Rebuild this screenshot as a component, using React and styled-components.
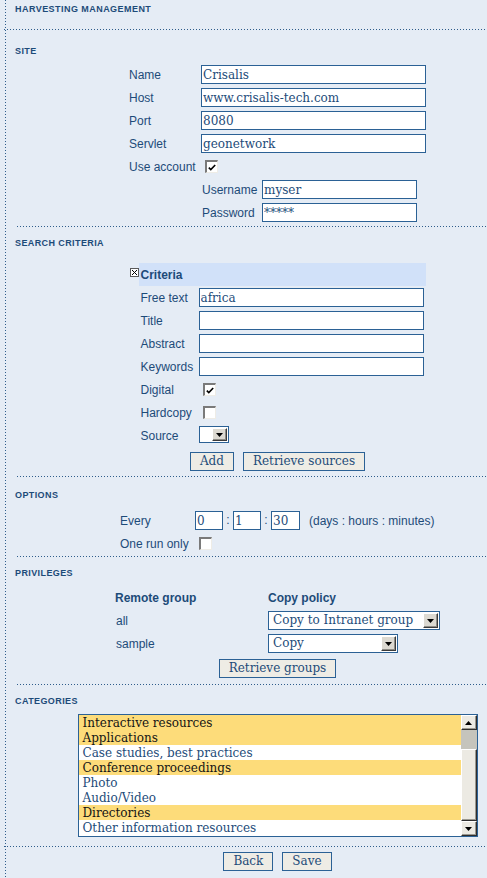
import React from 'react';
import styled, { createGlobalStyle } from 'styled-components';

const C = {
  bg: '#e5ecf5',
  ink: '#1d4b79',
  border: '#2b6195',
  dot: '#2f5d8b',
  header: '#d1e1f9',
  hl: '#fddc7a',
  btn: '#eeece5',
};

const SANS = '"Liberation Sans", Arial, sans-serif';
const SERIF = '"DejaVu Serif", serif';

const Global = createGlobalStyle`
  html, body { margin: 0; padding: 0; background: ${C.bg}; overflow: hidden; }
  body { font-family: ${SANS}; font-size: 12px; color: ${C.ink}; }
`;

const Page = styled.div`
  min-height: 878px;
  margin-left: 5px;
  padding-left: 1px;
  background-image: linear-gradient(to bottom, ${C.dot} 1px, transparent 1px);
  background-size: 1px 3px;
  background-repeat: repeat-y;
  background-position: 0 0;
`;

const TitleBar = styled.h1`
  margin: 0;
  height: 29px;
  box-sizing: border-box;
  padding: 4px 0 0 9px;
  font: bold 9px/11px ${SANS};
  letter-spacing: 0.45px;
  color: ${C.ink};
  text-transform: uppercase;
`;

const Rule = styled.div`
  height: 1px;
  margin-left: ${(p) => (p.$inset ? 11 : -2)}px;
  background-image: linear-gradient(to right, ${C.dot} 1px, transparent 1px);
  background-size: 3px 1px;
  background-repeat: repeat-x;
`;

const Section = styled.section`
  padding-bottom: ${(p) => p.$pb}px;
`;

const Heading = styled.h2`
  margin: ${(p) => p.$mt ?? 11}px 0 0 9px;
  font: bold 9px/11px ${SANS};
  letter-spacing: 0.4px;
  color: ${C.ink};
  text-transform: uppercase;
`;

const Body = styled.div`
  margin-top: ${(p) => p.$mt}px;
  padding-left: 62px;
  display: flex;
  justify-content: center;
`;

const FormGrid = styled.div`
  display: grid;
  grid-template-columns: ${(p) => p.$cols};
  grid-auto-rows: 19px;
  row-gap: 4px;
  align-items: center;
  padding-left: ${(p) => p.$pl || 0}px;
`;

const SubGrid = styled(FormGrid)`
  grid-column: 2;
  grid-row: span 2;
`;

const Label = styled.span`
  box-sizing: border-box;
  height: 19px;
  padding-top: 2px;
  font: ${(p) => (p.$bold ? 'bold ' : '')}12px/17px ${SANS};
  color: ${C.ink};
  white-space: nowrap;
  padding-left: ${(p) => p.$pl || 0}px;
`;

const TextInput = styled.input`
  box-sizing: border-box;
  width: ${(p) => p.$w}px;
  height: 19px;
  margin: 0;
  padding: 0 1px;
  border: 1px solid ${C.border};
  border-radius: 0;
  background: #fff;
  font: 12px ${SERIF};
  color: ${C.ink};
  outline: none;
`;

const CheckBox = styled.span`
  display: inline-flex;
  align-items: center;
  justify-content: center;
  box-sizing: border-box;
  width: 13px;
  height: 13px;
  margin-left: 4px;
  background: #fff;
  border-top: 2px solid #7a7a7a;
  border-left: 2px solid #7a7a7a;
  border-right: 1px solid #eeece6;
  border-bottom: 1px solid #eeece6;
`;

const Check = ({ on }) => (
  <CheckBox>
    {on && (
      <svg width="8" height="7" viewBox="0 0 8 7">
        <path d="M0.8 3.6 L2.8 5.6 L7.2 1" fill="none" stroke="#000" strokeWidth="1.6" />
      </svg>
    )}
  </CheckBox>
);

const SelectBox = styled.div`
  display: flex;
  box-sizing: border-box;
  width: ${(p) => p.$w}px;
  height: ${(p) => p.$h || 19}px;
  align-self: ${(p) => (p.$top ? 'start' : 'center')};
  border: 1px solid ${C.border};
  background: #fff;
`;

const SelectText = styled.span`
  flex: 1;
  padding-left: 4px;
  font: 12px/17px ${SERIF};
  color: ${C.ink};
  white-space: nowrap;
  overflow: hidden;
`;

const DropBtn = styled.span`
  box-sizing: border-box;
  width: 15px;
  margin: 1px;
  display: flex;
  align-items: center;
  justify-content: center;
  background: #dcd9d1;
  border-top: 1px solid #fff;
  border-left: 1px solid #fff;
  border-right: 1px solid #3a3a3a;
  border-bottom: 1px solid #3a3a3a;
  box-shadow: inset -1px -1px 0 #8e8c86;
`;

const Arrow = ({ up }) => (
  <svg width="7" height="4" viewBox="0 0 7 4">
    <path d={up ? 'M0 4 L7 4 L3.5 0 Z' : 'M0 0 L7 0 L3.5 4 Z'} fill="#000" />
  </svg>
);

const Select = ({ w, h, top, children }) => (
  <SelectBox $w={w} $h={h} $top={top}>
    <SelectText>{children}</SelectText>
    <DropBtn>
      <Arrow />
    </DropBtn>
  </SelectBox>
);

const Button = styled.button`
  box-sizing: border-box;
  height: 19px;
  margin: 0;
  padding: 0 9px;
  border: 1px solid ${C.border};
  border-radius: 0;
  background: ${C.btn};
  font: 12px/17px ${SERIF};
  color: ${C.ink};
  cursor: pointer;
`;

const ButtonRow = styled.div`
  display: flex;
  justify-content: center;
  gap: 9px;
  margin-top: ${(p) => p.$mt || 0}px;
`;

/* Search criteria block */
const CriteriaBlock = styled.div`
  width: 296px;
  display: flex;
  flex-direction: column;
`;

const HeadRow = styled.div`
  display: flex;
`;

const IconCell = styled.span`
  width: 9px;
  padding-top: 5px;
  line-height: 0;
`;

const CriteriaHead = styled.div`
  flex: 1;
  height: 23px;
  padding-left: 2px;
  background: ${C.header};
  font: bold 12px/24px ${SANS};
  color: ${C.ink};
`;

const CriteriaFields = styled(FormGrid)`
  margin: 2px 0 0 9px;
`;

const RemoveIcon = () => (
  <svg width="9" height="9" viewBox="0 0 9 9">
    <rect x="0.5" y="0.5" width="8" height="8" fill="#fff" stroke="#5a5a5a" />
    <path d="M2 2 L7 7 M7 2 L2 7" stroke="#000" strokeWidth="1" />
  </svg>
);

/* Options */
const TimeRow = styled.div`
  display: flex;
  align-items: center;
`;

const Colon = styled.span`
  width: 10px;
  text-align: center;
  font: 12px/19px ${SANS};
`;

const Hint = styled.span`
  margin-left: 9px;
  padding-top: 2px;
  font: 12px/17px ${SANS};
  white-space: nowrap;
`;

/* Privileges */
const PrivBlock = styled.div`
  display: flex;
  flex-direction: column;
  align-items: center;
`;

/* Categories list */
const ListBox = styled.div`
  display: flex;
  box-sizing: border-box;
  width: 400px;
  height: 123px;
  border: 1px solid ${C.border};
  background: #fff;
`;

const ListItems = styled.ul`
  flex: 1;
  margin: 0;
  padding: 0;
  list-style: none;
`;

const ListItem = styled.li`
  height: 15px;
  padding-left: 4px;
  font: 12px/16px ${SERIF};
  white-space: nowrap;
  background: ${(p) => (p.$sel ? C.hl : 'transparent')};
  color: ${(p) => (p.$sel ? '#141414' : C.ink)};
`;

const ScrollBar = styled.div`
  width: 16px;
  display: flex;
  flex-direction: column;
  background: #c5c4bc;
`;

const ScrollBtn = styled.span`
  box-sizing: border-box;
  height: 15px;
  display: flex;
  align-items: center;
  justify-content: center;
  background: #eceae3;
  border-top: 1px solid #fff;
  border-left: 1px solid #fff;
  border-right: 1px solid #2e2e2e;
  border-bottom: 1px solid #2e2e2e;
  box-shadow: inset -1px -1px 0 #9a9890;
`;

const ScrollGap = styled.span`
  height: 19px;
`;

const ScrollThumb = styled.span`
  flex: 1;
  box-sizing: border-box;
  background: #eceae3;
  border-top: 1px solid #fff;
  border-left: 1px solid #fff;
  border-right: 1px solid #2e2e2e;
  border-bottom: 1px solid #2e2e2e;
  box-shadow: inset -1px -1px 0 #9a9890;
`;

const Footer = styled.div`
  padding: 5px 0 0 62px;
  display: flex;
  justify-content: center;
  gap: 9px;
`;

const categories = [
  ['Interactive resources', true],
  ['Applications', true],
  ['Case studies, best practices', false],
  ['Conference proceedings', true],
  ['Photo', false],
  ['Audio/Video', false],
  ['Directories', true],
  ['Other information resources', false],
];

const Field = ({ w, value }) => <TextInput $w={w} value={value} readOnly />;

export default function App() {
  return (
    <>
      <Global />
      <Page>
        <TitleBar>Harvesting Management</TitleBar>
        <Rule />

        <Section $pb={4}>
          <Heading $mt={16}>Site</Heading>
          <Body $mt={8}>
            <FormGrid $cols="72px 225px">
              <Label>Name</Label>
              <Field w={225} value="Crisalis" />
              <Label>Host</Label>
              <Field w={225} value="www.crisalis-tech.com" />
              <Label>Port</Label>
              <Field w={225} value="8080" />
              <Label>Servlet</Label>
              <Field w={225} value="geonetwork" />
              <Label>Use account</Label>
              <Check on />
              <SubGrid $cols="60px 155px" $pl={1}>
                <Label>Username</Label>
                <Field w={155} value="myser" />
                <Label>Password</Label>
                <Field w={155} value="*****" />
              </SubGrid>
            </FormGrid>
          </Body>
        </Section>
        <Rule $inset />

        <Section $pb={5}>
          <Heading>Search criteria</Heading>
          <Body $mt={14}>
            <CriteriaBlock>
              <HeadRow>
                <IconCell>
                  <RemoveIcon />
                </IconCell>
                <CriteriaHead>Criteria</CriteriaHead>
              </HeadRow>
              <CriteriaFields $cols="60px 227px">
                <Label $pl={2}>Free text</Label>
                <Field w={225} value="africa" />
                <Label $pl={2}>Title</Label>
                <Field w={225} value="" />
                <Label $pl={2}>Abstract</Label>
                <Field w={225} value="" />
                <Label $pl={2}>Keywords</Label>
                <Field w={225} value="" />
                <Label $pl={2}>Digital</Label>
                <Check on />
                <Label $pl={2}>Hardcopy</Label>
                <Check />
                <Label $pl={2}>Source</Label>
                <Select w={30} h={17} top>
                  {''}
                </Select>
              </CriteriaFields>
              <ButtonRow $mt={7}>
                <Button>Add</Button>
                <Button>Retrieve sources</Button>
              </ButtonRow>
            </CriteriaBlock>
          </Body>
        </Section>
        <Rule $inset />

        <Section $pb={3}>
          <Heading $mt={13}>Options</Heading>
          <Body $mt={10}>
            <FormGrid $cols="75px 240px">
              <Label>Every</Label>
              <TimeRow>
                <Field w={28} value="0" />
                <Colon>:</Colon>
                <Field w={28} value="1" />
                <Colon>:</Colon>
                <Field w={29} value="30" />
                <Hint>(days : hours : minutes)</Hint>
              </TimeRow>
              <Label>One run only</Label>
              <Check />
            </FormGrid>
          </Body>
        </Section>
        <Rule $inset />

        <Section $pb={6}>
          <Heading>Privileges</Heading>
          <Body $mt={9}>
            <PrivBlock>
              <FormGrid $cols="153px 172px">
                <Label $bold>Remote group</Label>
                <Label $bold>Copy policy</Label>
                <Label $pl={1}>all</Label>
                <Select w={172}>Copy to Intranet group</Select>
                <Label $pl={1}>sample</Label>
                <Select w={130}>Copy</Select>
              </FormGrid>
              <ButtonRow $mt={6}>
                <Button>Retrieve groups</Button>
              </ButtonRow>
            </PrivBlock>
          </Body>
        </Section>
        <Rule $inset />

        <Section $pb={9}>
          <Heading>Categories</Heading>
          <Body $mt={7}>
            <ListBox>
              <ListItems>
                {categories.map(([name, sel]) => (
                  <ListItem key={name} $sel={sel}>
                    {name}
                  </ListItem>
                ))}
              </ListItems>
              <ScrollBar>
                <ScrollBtn>
                  <Arrow up />
                </ScrollBtn>
                <ScrollGap />
                <ScrollThumb />
                <ScrollBtn>
                  <Arrow />
                </ScrollBtn>
              </ScrollBar>
            </ListBox>
          </Body>
        </Section>
        <Rule />

        <Footer>
          <Button>Back</Button>
          <Button>Save</Button>
        </Footer>
      </Page>
    </>
  );
}
